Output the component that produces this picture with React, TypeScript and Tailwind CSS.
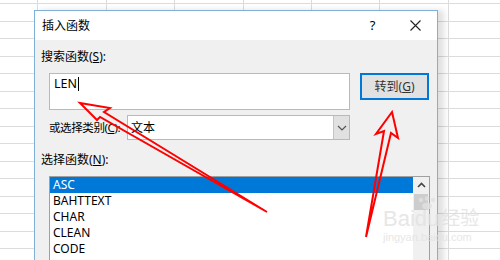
import React from 'react';

const functions = ['ASC', 'BAHTTEXT', 'CHAR', 'CLEAN', 'CODE'];

/**
 * Sheet
 *
 * Rejilla de Excel que queda detrás del cuadro de diálogo.
 */
function Sheet() {
  return (
    <div className="ml-[-30px] mt-[-13.5px] flex flex-col">
      {Array.from({ length: 17 }).map((_, r) => (
        <div key={r} className="flex h-[17.5px]">
          {Array.from({ length: 9 }).map((_, c) => (
            <div
              key={c}
              className="h-full w-[68.4px] shrink-0 border-b border-r border-[#dcdcdc]"
            />
          ))}
        </div>
      ))}
    </div>
  );
}

function ChevronDown() {
  return (
    <svg width="10" height="6" viewBox="0 0 10 6" fill="none">
      <path d="M1 1l4 4 4-4" stroke="#555" strokeWidth="1.2" />
    </svg>
  );
}

function ChevronUp() {
  return (
    <svg width="9" height="6" viewBox="0 0 9 6" fill="none">
      <path d="M1 5l3.5-3.5L8 5" stroke="#444" strokeWidth="1.6" />
    </svg>
  );
}

/**
 * InsertFunctionDialog
 *
 * Cuadro "插入函数" con búsqueda, categoría y lista de funciones.
 */
function InsertFunctionDialog() {
  return (
    <div className="absolute left-[34px] top-[10px] h-[260px] w-[404px] border border-[#7fb0d8] bg-[#f0f0f0] shadow-[6px_0_6px_rgba(0,0,0,0.12)]">
      {/* Barra de título */}
      <div className="flex h-[29px] items-center bg-white text-[12px] text-black">
        <span className="pl-[7px]">插入函数</span>
        <div className="ml-auto flex h-full">
          <span className="flex w-[43px] items-center justify-center text-[13px]">?</span>
          <span className="flex w-[43px] items-center justify-center">
            <svg width="11" height="11" viewBox="0 0 11 11">
              <path d="M0.5 0.5l10 10M10.5 0.5l-10 10" stroke="#222" strokeWidth="1.1" />
            </svg>
          </span>
        </div>
      </div>

      <div className="flex flex-col text-[12px] text-black">
        {/* Buscar función */}
        <div className="mt-[9px] pl-[6px] leading-[16px]">
          搜索函数(<span className="underline">S</span>):
        </div>
        <div className="mt-[8px] flex items-start gap-[10px] pl-[14px]">
          <div className="flex h-[37px] w-[301px] items-start border border-[#b9b9b9] bg-white pl-[4px] pt-[2px] leading-[16px]">
            <span className="text-[12.5px]">LEN</span>
            <span className="ml-[1px] mt-[1px] h-[14px] w-px bg-black" />
          </div>
          <div className="flex h-[27px] w-[69px] items-center justify-center border-2 border-[#0078d7] bg-[#e1e1e1] text-[#333]">
            转到(<span className="underline">G</span>)
          </div>
        </div>

        {/* Categoría */}
        <div className="mt-[5px] flex items-center pl-[14px]">
          <span className="w-[78px] shrink-0 whitespace-nowrap text-[11.5px] leading-[16px] tracking-[-0.4px]">
            或选择类别(<span className="underline">C</span>):
          </span>
          <div className="flex h-[25px] w-[223px] items-stretch border border-[#b9b9b9] bg-white">
            <span className="flex flex-1 items-center pl-[3px]">文本</span>
            <span className="flex w-[16px] items-center justify-center border-l border-[#c4c4c4] bg-[#e1e1e1]">
              <ChevronDown />
            </span>
          </div>
        </div>

        {/* Lista de funciones */}
        <div className="mt-[12px] pl-[6px] leading-[16px]">
          选择函数(<span className="underline">N</span>):
        </div>
        <div className="ml-[14px] mt-[8px] flex h-[120px] w-[381px] border border-[#a0a0a0] bg-white">
          <div className="flex flex-1 flex-col">
            {functions.map((fn, i) => (
              <div
                key={fn}
                className={
                  i === 0
                    ? 'flex h-[16px] items-center bg-[#0078d7] pl-[3px] text-white'
                    : 'flex h-[16px] items-center pl-[3px] text-black'
                }
              >
                {fn}
              </div>
            ))}
          </div>
          <div className="flex w-[16px] flex-col bg-[#f0f0f0]">
            <div className="flex h-[16px] items-center justify-center">
              <ChevronUp />
            </div>
            <div className="mx-[1px] mt-[1px] h-[16px] bg-[#cdcdcd]" />
          </div>
        </div>
      </div>
    </div>
  );
}

function Arrows() {
  return (
    <svg className="pointer-events-none absolute inset-0" width="500" height="260" viewBox="0 0 500 260" fill="none">
      <polygon
        points="80,103 110,108 104,112 267,212 100,117 97,120"
        stroke="#ff0000"
        strokeWidth="2"
        strokeLinejoin="miter"
      />
      <polygon
        points="392,112 398,138 391,133 366,237 384,131 376,134"
        stroke="#ff0000"
        strokeWidth="2"
        strokeLinejoin="miter"
      />
    </svg>
  );
}

function Watermark() {
  return (
    <div className="pointer-events-none absolute left-[383px] top-[208px] flex flex-col text-[#e2e2e2] opacity-80 [font-family:'Liberation_Sans','Noto_Sans_CJK_SC',sans-serif]">
      <div className="relative flex items-end leading-[22px]">
        <span className="text-[22px]">Bai</span>
        <span className="relative text-[22px]">
          du
          <svg className="absolute left-[2px] top-[-12px]" width="20" height="14" viewBox="0 0 20 14">
            <circle cx="4" cy="4" r="2.2" fill="#e2e2e2" />
            <circle cx="10" cy="2.5" r="2.2" fill="#e2e2e2" />
            <circle cx="16" cy="4" r="2.2" fill="#e2e2e2" />
            <ellipse cx="10" cy="10" rx="5" ry="3.5" fill="#e2e2e2" />
          </svg>
        </span>
        <span className="ml-[2px] text-[19px]">经验</span>
      </div>
      <span className="mt-[1px] text-[11px] leading-[13px]">jingyan.baidu.com</span>
    </div>
  );
}

export default function App() {
  return (
    <div className="relative h-[260px] w-[500px] overflow-hidden bg-white [font-family:'Noto_Sans','Noto_Sans_CJK_SC',sans-serif]">
      <Sheet />
      <InsertFunctionDialog />
      <Watermark />
      <Arrows />
    </div>
  );
}
